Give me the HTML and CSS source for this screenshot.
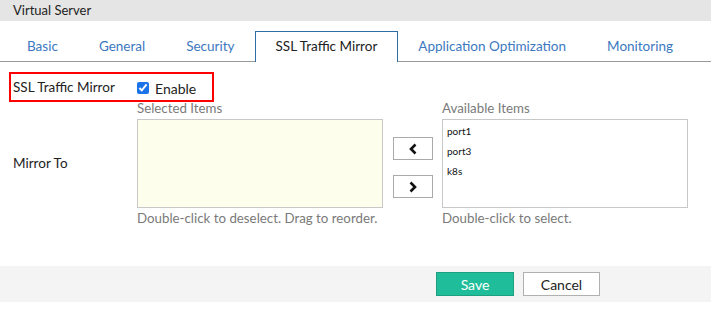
FILE: index.html
```html
<!DOCTYPE html>
<html lang="en">
<head>
    <meta charset="UTF-8">
    <title>Virtual Server</title>
    <link rel="stylesheet" href="styles.css">
</head>
<body>

<div class="panel-title">Virtual Server</div>

<!-- tabs -->
<ul class="tabs">
    <li>Basic</li>
    <li>General</li>
    <li>Security</li>
    <li class="active">SSL Traffic Mirror</li>
    <li>Application Optimization</li>
    <li>Monitoring</li>
</ul>

<div class="form">
    <div class="form-row">
        <div class="highlight">
            <label class="form-label">SSL Traffic Mirror</label>
            <label class="check"><input type="checkbox" checked> Enable</label>
        </div>
    </div>

    <div class="form-row mirror-row">
        <label class="form-label">Mirror To</label>
        <div class="list-group">
            <div class="list-col">
                <div class="list-caption">Selected Items</div>
                <div class="list-box selected"></div>
                <div class="list-help">Double-click to deselect. Drag to reorder.</div>
            </div>
            <div class="move-buttons">
                <button class="move-btn">
                    <svg width="10" height="12" viewBox="0 0 10 12"><path d="M7.5 1.5 L3 6 L7.5 10.5" fill="none" stroke="#111" stroke-width="2.6"/></svg>
                </button>
                <button class="move-btn">
                    <svg width="10" height="12" viewBox="0 0 10 12"><path d="M2.5 1.5 L7 6 L2.5 10.5" fill="none" stroke="#111" stroke-width="2.6"/></svg>
                </button>
            </div>
            <div class="list-col">
                <div class="list-caption">Available Items</div>
                <div class="list-box">
                    <div class="list-item">port1</div>
                    <div class="list-item">port3</div>
                    <div class="list-item">k8s</div>
                </div>
                <div class="list-help">Double-click to select.</div>
            </div>
        </div>
    </div>
</div>

<div class="footer">
    <button class="btn btn-save">Save</button>
    <button class="btn btn-cancel">Cancel</button>
</div>

</body>
</html>
```

FILE: styles.css
```css
body {
    font-family: Lato, "Open Sans", sans-serif;
    background-color: #fff;
    color: #222;
    margin: 0;
    padding: 0;
}

.panel-title {
    height: 21px;
    line-height: 20px;
    padding-left: 13px;
    background-color: #e5e5e5;
    font-size: 13px;
    color: #222;
}

.tabs {
    list-style: none;
    display: flex;
    margin: 10px 0 0 0;
    padding: 0 0 0 7px;
    border-bottom: 1px solid #9a9a9a;
    height: 30px;
}

.tabs li {
    padding: 0 19.5px;
    line-height: 28px;
    font-size: 13.5px;
    color: #3c78c0;
    border: 1px solid transparent;
    border-bottom: none;
    margin-bottom: -1px;
}

.tabs li:first-child {
    padding-left: 19px;
}

.tabs li.active {
    color: #222;
    background-color: #fff;
    border-color: #2f6ea5;
    height: 30px;
}

.form {
    padding-top: 10px;
}

.form-row {
    display: flex;
    align-items: center;
}

.form-label {
    width: 124px;
    font-size: 13.5px;
}

.highlight {
    display: flex;
    align-items: center;
    margin-left: 9px;
    padding: 0 16px 0 2px;
    height: 26px;
    border: 2px solid #f00;
}

.check {
    display: flex;
    align-items: center;
    font-size: 14px;
    padding-top: 2px;
}

.check input {
    width: 12px;
    height: 12px;
    margin: 0 6px 0 0;
    accent-color: #1a73e8;
}

.mirror-row {
    padding-left: 13px;
    margin-top: -2px;
}

.list-group {
    display: flex;
}

.list-col {
    display: flex;
    flex-direction: column;
}

.list-caption,
.list-help {
    font-size: 13.3px;
    color: #7a7a7a;
    line-height: 16px;
}

.list-caption {
    margin-bottom: 3px;
}

.list-help {
    margin-top: 2px;
}

.list-box {
    width: 244px;
    border: 1px solid #c8c8c8;
    background-color: #fff;
    padding: 1px 0 0 0;
    height: 86px;
}

.list-box.selected {
    background-color: #fefeec;
}

.list-item {
    font-size: 10px;
    line-height: 20px;
    padding-left: 4px;
    color: #111;
}

.move-buttons {
    display: flex;
    flex-direction: column;
    gap: 15px;
    padding: 37px 9px 0 10px;
}

.move-btn {
    width: 40px;
    height: 23px;
    border: 1px solid #aaa;
    background-color: #fff;
    padding: 0;
    display: flex;
    align-items: center;
    justify-content: center;
}

.footer {
    margin-top: 40px;
    height: 36px;
    background-color: #f4f4f4;
    display: flex;
    align-items: center;
    padding-left: 436px;
    gap: 9px;
}

.btn {
    height: 24px;
    width: 78px;
    font-family: Lato, "Open Sans", sans-serif;
    font-size: 14px;
    cursor: pointer;
}

.btn-save {
    background-color: #20bd9a;
    border: 1px solid #1f9e80;
    color: #fff;
}

.btn-cancel {
    width: 77px;
    background-color: #fff;
    border: 1px solid #b0b0b0;
    color: #222;
}
```
